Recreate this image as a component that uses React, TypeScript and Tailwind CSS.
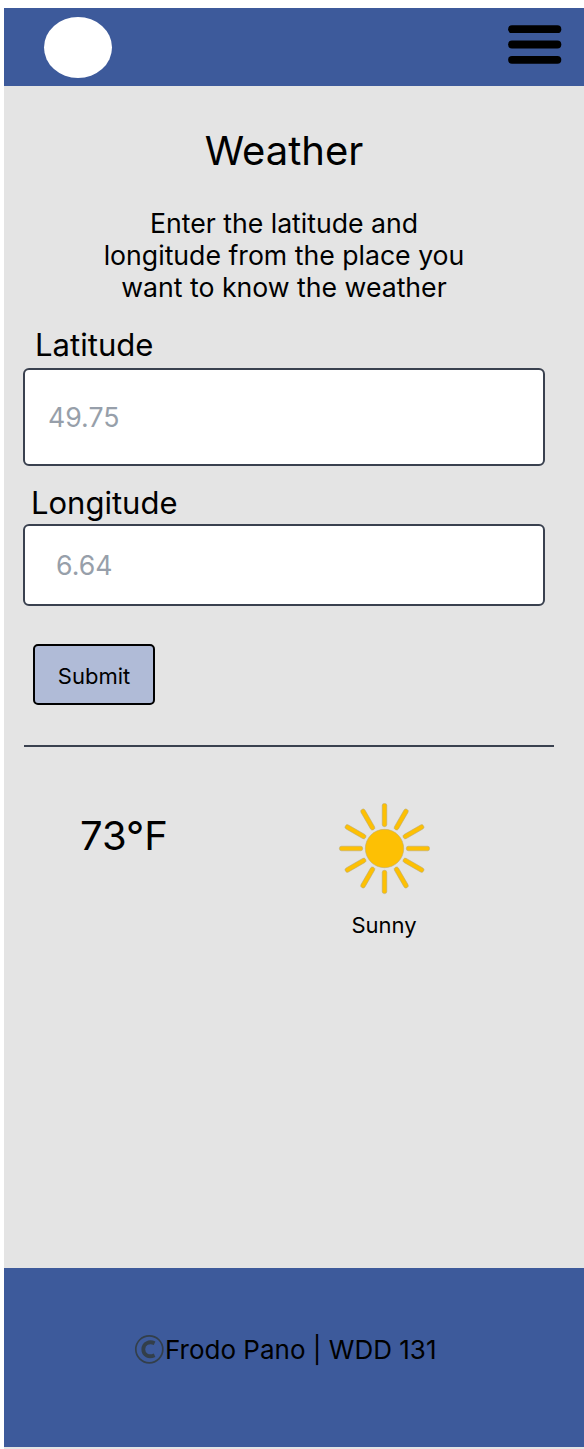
const rays = [0, 30, 60, 90, 120, 150, 180, 210, 240, 270, 300, 330];

function MenuIcon() {
  return (
    <svg width="54" height="40" viewBox="0 0 54 40" aria-label="Menu">
      <g stroke="#000" strokeWidth="7.8" strokeLinecap="round">
        <path d="M4 4.2H49.4" />
        <path d="M4 19.5H49.4" />
        <path d="M4 34.8H49.4" />
      </g>
    </svg>
  );
}

function SunIcon() {
  return (
    <svg width="92" height="92" viewBox="-46.5 -45.5 92 92" aria-label="Sun">
      <g fill="#fdc004" stroke="#b5a675" strokeWidth="0.5">
        <circle r="19.2" />
        {rays.map((a) => (
          <rect key={a} x="-2.3" y="-45.1" width="4.6" height="23.3" rx="2.1" transform={`rotate(${a})`} />
        ))}
      </g>
    </svg>
  );
}

function CopyrightIcon() {
  return (
    <svg width="31" height="30" viewBox="0 0 31 30" fill="none" stroke="#333f4a" aria-label="Copyright">
      <circle cx="15.3" cy="15.3" r="13.5" strokeWidth="1.7" />
      <path d="M20.6 9.3C15.2 6.7 9.3 9.3 9.3 15.3C9.3 21.5 14.9 23.7 20.6 21.2" strokeWidth="3.8" />
    </svg>
  );
}

export default function App() {
  return (
    <div className="flex h-[1449px] w-[584px] flex-col bg-white pt-2 pl-1 font-['Inter',sans-serif] text-black">
      <header className="flex h-[78px] shrink-0 items-start justify-between bg-[#3d5a9b] pr-[22px] pl-10">
        <div className="mt-[9px] h-[61px] w-[68px] rounded-[50%] bg-white" />
        <button className="mt-[17px]">
          <MenuIcon />
        </button>
      </header>

      <main className="flex h-[1182px] shrink-0 flex-col bg-[#e4e4e4] pt-[41px] pl-[19px]">
        <h1 className="w-[522px] text-center text-[40px] leading-[48px] whitespace-nowrap">Weather</h1>
        <p className="mt-8 w-[522px] text-center text-[26.65px] leading-[32px] whitespace-nowrap">
          Enter the latitude and
          <br />
          longitude from the place you
          <br />
          want to know the weather
        </p>
        <label className="mt-[23px] h-[42px] pl-[12px] text-[31.1px] leading-[38px]">Latitude</label>
        <div className="flex h-[98px] w-[522px] items-center rounded-md border-2 border-[#3a414f] bg-white pl-[23px] text-[26.7px] text-[#979faa]">
          49.75
        </div>
        <label className="mt-[18px] h-[40px] pl-[8px] text-[31px] leading-[38px]">Longitude</label>
        <div className="flex h-[82px] w-[522px] items-center rounded-md border-2 border-[#3a414f] bg-white pl-[31px] text-[26.7px] text-[#979faa]">
          6.64
        </div>
        <button className="mt-[38px] ml-[10px] flex h-[61px] w-[122px] items-center justify-center rounded-[5px] border-2 border-black bg-[#b0bbd7] pt-1 text-[22px]">
          Submit
        </button>
        <hr className="mt-10 ml-px h-0.5 w-[530px] border-0 bg-[#3a414f]" />
        <section className="flex">
          <div className="mt-16 w-[244px] pl-[57px] text-[40px] leading-[49px] whitespace-nowrap">73°F</div>
          <div className="mt-[56px] flex w-[234px] flex-col items-center">
            <SunIcon />
            <div className="mt-[17px] text-[22px] leading-[27px]">Sunny</div>
          </div>
        </section>
      </main>

      <footer className="flex h-[179px] shrink-0 items-start bg-[#3d5a9b] pt-[66px] pl-[130px]">
        <CopyrightIcon />
        <div className="text-[26px] leading-8 whitespace-nowrap">Frodo Pano | WDD 131</div>
      </footer>
      <div className="h-0.5 shrink-0 bg-[#e4e4e4]" />
    </div>
  );
}
